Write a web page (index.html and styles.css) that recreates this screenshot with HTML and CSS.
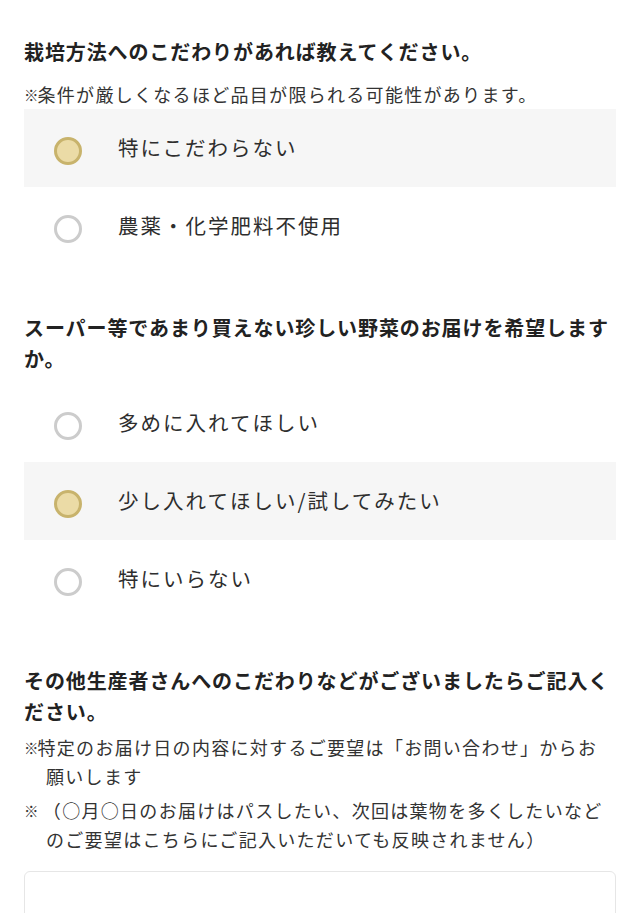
FILE: index.html
```html
<!DOCTYPE html>
<html lang="ja">
<head>
<meta charset="utf-8">
<title>アンケート</title>
<link rel="stylesheet" href="styles.css">
</head>
<body>
<main class="form">
  <section class="q q-first">
    <h2 class="q-title">栽培方法へのこだわりがあれば教えてください。</h2>
    <p class="q-note q-note-first"><span class="kome">※</span>条件が厳しくなるほど品目が限られる可能性があります。</p>
    <div class="options">
      <label class="opt opt-checked"><span class="radio radio-on"></span><span class="opt-text">特にこだわらない</span></label>
      <label class="opt"><span class="radio"></span><span class="opt-text">農薬・化学肥料不使用</span></label>
    </div>
  </section>

  <section class="q">
    <h2 class="q-title">スーパー等であまり買えない珍しい野菜のお届けを希望しますか。</h2>
    <div class="options options-gap">
      <label class="opt"><span class="radio"></span><span class="opt-text">多めに入れてほしい</span></label>
      <label class="opt opt-checked"><span class="radio radio-on"></span><span class="opt-text">少し入れてほしい/試してみたい</span></label>
      <label class="opt"><span class="radio"></span><span class="opt-text">特にいらない</span></label>
    </div>
  </section>

  <section class="q">
    <h2 class="q-title">その他生産者さんへのこだわりなどがございましたらご記入ください。</h2>
    <p class="q-note hang"><span class="kome">※</span>特定のお届け日の内容に対するご要望は「お問い合わせ」からお<br>願いします</p>
    <p class="q-note hang"><span class="kome">※</span> （○月○日のお届けはパスしたい、次回は葉物を多くしたいなど<br>のご要望はこちらにご記入いただいても反映されません）</p>
    <div class="textbox"></div>
  </section>
</main>
</body>
</html>
```
FILE: styles.css
```css
html, body {
  margin: 0;
  padding: 0;
  background: #ffffff;
}
body {
  font-family: "Noto Sans CJK JP", "Noto Sans", sans-serif;
  color: #333333;
}
.form {
  padding: 36px 24px 0;
}
.q {
  margin-top: 47px;
}
.q-first {
  margin-top: 0;
}
.q-title {
  margin: 0;
  font-size: 20px;
  line-height: 31px;
  font-weight: 700;
  letter-spacing: 0.9px;
  color: #222222;
}
.q-note {
  margin: 6px 0 0;
  font-size: 18px;
  line-height: 28px;
  letter-spacing: 1.3px;
  color: #333333;
}
.q-note-first {
  margin-top: 13px;
}
.hang {
  padding-left: 22px;
  text-indent: -22px;
}
.kome {
  font-size: 14.5px;
  letter-spacing: 0;
  display: inline-block;
  width: 13.5px;
  text-indent: 0;
  vertical-align: 1px;
}
.options {
  display: flex;
  flex-direction: column;
}
.options-gap {
  margin-top: 10px;
}
.opt {
  display: flex;
  align-items: center;
  gap: 36px;
  height: 78px;
  padding-left: 30px;
  box-sizing: border-box;
}
.opt-checked {
  background: #f6f6f6;
}
.radio {
  width: 22px;
  height: 22px;
  border: 3px solid #cccccc;
  border-radius: 50%;
  background: #ffffff;
  flex: none;
  margin-top: 6px;
}
.radio-on {
  border-color: #c8b36c;
  background: #ebdba6;
}
.opt-text {
  font-size: 20.5px;
  line-height: 28px;
  letter-spacing: 2px;
  color: #2e2e2e;
  margin-top: -2px;
}
.textbox {
  margin-top: 18px;
  height: 150px;
  border: 1px solid #e6e6e6;
  border-radius: 6px;
}
```
